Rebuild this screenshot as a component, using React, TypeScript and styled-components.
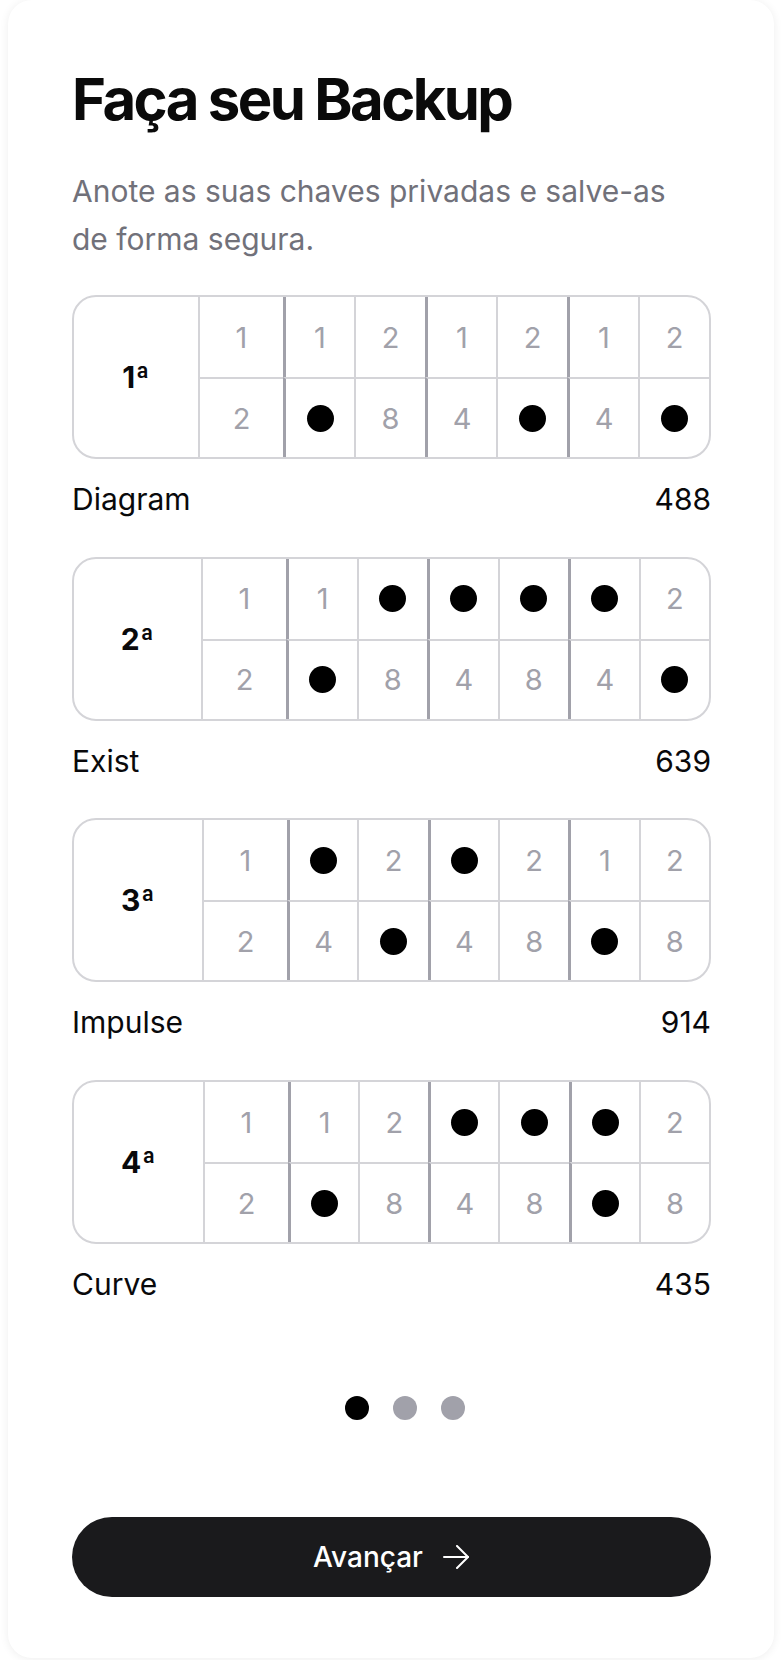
import React from 'react';
import styled, { createGlobalStyle } from 'styled-components';

const GlobalStyle = createGlobalStyle`
  html, body {
    margin: 0;
    padding: 0;
    background: #fff;
  }
  body {
    font-family: Inter, "Noto Sans", "Liberation Sans", sans-serif;
    color: #09090b;
    -webkit-font-smoothing: antialiased;
  }
  * {
    box-sizing: border-box;
  }
`;

const Page = styled.div`
  padding: 0 8px 2px;
`;

const Card = styled.div`
  background: #fff;
  border-radius: 24px;
  box-shadow: 0 1px 10px rgba(0, 0, 0, 0.07);
  padding: 64px 63px 61px 64px;
  display: flex;
  flex-direction: column;
`;

const Title = styled.h1`
  margin: 0;
  font-size: 58px;
  line-height: 70px;
  font-weight: 700;
  letter-spacing: -2.6px;
  color: #0a0a0a;
`;

const Lead = styled.p`
  margin: 33px 0 0;
  max-width: 620px;
  font-size: 30px;
  line-height: 48px;
  color: #71717a;
`;

const Blocks = styled.div`
  margin-top: 32px;
  display: flex;
  flex-direction: column;
  gap: 34.7px;
`;

const Block = styled.section``;

const Board = styled.div<{ $labelWidth: number }>`
  display: grid;
  grid-template-columns: ${p => p.$labelWidth}px 85px repeat(6, 1fr);
  grid-template-rows: 1fr 1fr;
  height: 164px;
  border: 2px solid #d4d4d8;
  border-radius: 24px;
  overflow: hidden;
`;

const Label = styled.div`
  grid-row: 1 / 3;
  display: flex;
  align-items: center;
  justify-content: center;
  font-size: 30px;
  font-weight: 700;
  color: #09090b;
`;

const Cell = styled.div<{ $thick: boolean; $lower: boolean }>`
  display: flex;
  align-items: center;
  justify-content: center;
  border-left: ${p => (p.$thick ? '3px solid #a1a1aa' : '2px solid #d4d4d8')};
  border-top: ${p => (p.$lower ? '2px solid #d4d4d8' : 'none')};
  font-size: 29px;
  color: #a1a1aa;
`;

const Dot = styled.span`
  width: 27px;
  height: 27px;
  border-radius: 50%;
  background: #000;
`;

const Caption = styled.div`
  margin-top: 18px;
  display: flex;
  justify-content: space-between;
  font-size: 30px;
  line-height: 45px;
  color: #09090b;
`;

const Pager = styled.div`
  margin-top: 89px;
  display: flex;
  justify-content: center;
  gap: 24px;
  padding-left: 26px;
`;

const PagerDot = styled.span<{ $active: boolean }>`
  width: 24px;
  height: 24px;
  border-radius: 50%;
  background: ${p => (p.$active ? '#000' : '#a1a1aa')};
`;

const NextButton = styled.button`
  margin-top: 96.7px;
  height: 80px;
  border: none;
  border-radius: 40px;
  background: #1a1a1c;
  color: #fff;
  display: flex;
  align-items: center;
  justify-content: center;
  gap: 20px;
  font-family: inherit;
  font-size: 28px;
  font-weight: 500;
  cursor: pointer;
`;

// values per row; a marked cell shows a dot instead of the number
const TOP = [1, 1, 2, 1, 2, 1, 2];
const BOTTOM = [2, 4, 8, 4, 8, 4, 8];
const THICK = [false, true, false, true, false, true, false];

type Word = {
  label: string;
  labelWidth: number;
  top: number[];
  bottom: number[];
  name: string;
  index: number;
};

const words: Word[] = [
  { label: '1ª', labelWidth: 124, top: [], bottom: [1, 4, 6], name: 'Diagram', index: 488 },
  { label: '2ª', labelWidth: 127, top: [2, 3, 4, 5], bottom: [1, 6], name: 'Exist', index: 639 },
  { label: '3ª', labelWidth: 128, top: [1, 3], bottom: [2, 5], name: 'Impulse', index: 914 },
  { label: '4ª', labelWidth: 129, top: [3, 4, 5], bottom: [1, 5], name: 'Curve', index: 435 },
];

const Arrow = () => (
  <svg width="27" height="24" viewBox="0 0 27 24" fill="none" stroke="currentColor" strokeWidth="2" strokeLinecap="round" strokeLinejoin="round">
    <path d="M1 12h24" />
    <path d="M14 1l11 11-11 11" />
  </svg>
);

function WordBoard({ word }: { word: Word }) {
  return (
    <Block>
      <Board $labelWidth={word.labelWidth}>
        <Label>{word.label}</Label>
        {TOP.map((v, i) => (
          <Cell key={'t' + i} $thick={THICK[i]} $lower={false}>
            {word.top.includes(i) ? <Dot /> : v}
          </Cell>
        ))}
        {BOTTOM.map((v, i) => (
          <Cell key={'b' + i} $thick={THICK[i]} $lower>
            {word.bottom.includes(i) ? <Dot /> : v}
          </Cell>
        ))}
      </Board>
      <Caption>
        <span>{word.name}</span>
        <span>{word.index}</span>
      </Caption>
    </Block>
  );
}

export default function App() {
  return (
    <Page>
      <GlobalStyle />
      <Card>
        <Title>Faça seu Backup</Title>
        <Lead>Anote as suas chaves privadas e salve-as de forma segura.</Lead>
        <Blocks>
          {words.map(w => (
            <WordBoard key={w.label} word={w} />
          ))}
        </Blocks>
        <Pager>
          <PagerDot $active />
          <PagerDot $active={false} />
          <PagerDot $active={false} />
        </Pager>
        <NextButton>
          Avançar
          <Arrow />
        </NextButton>
      </Card>
    </Page>
  );
}
